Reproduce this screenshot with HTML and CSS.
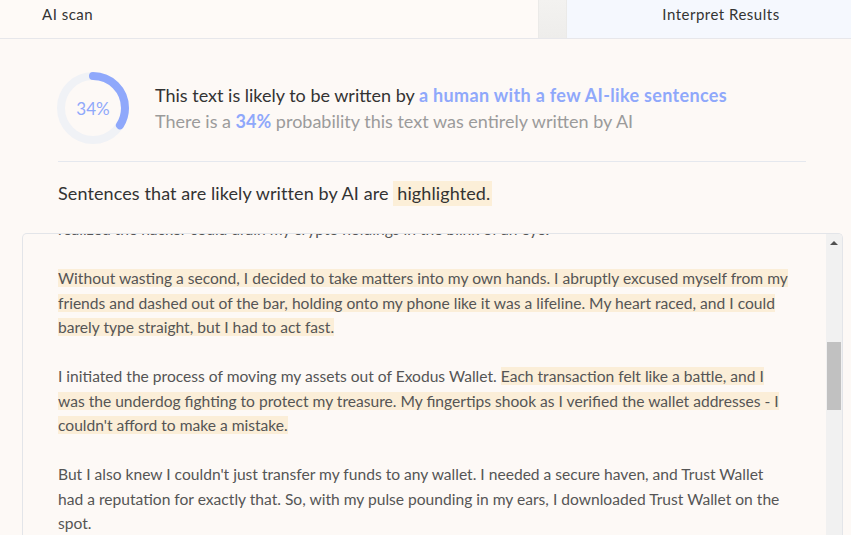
FILE: index.html
```html
<!DOCTYPE html>
<html lang="en">
<head>
<meta charset="utf-8">
<title>AI scan</title>
<link rel="stylesheet" href="styles.css">
</head>
<body>
<div class="tabs">
  <div class="tab tab-active">AI scan</div>
  <div class="tab-gap"></div>
  <div class="tab tab-other">Interpret Results</div>
</div>

<section class="summary">
  <div class="score">
    <svg class="ring" viewBox="0 0 72 72" width="72" height="72">
      <circle cx="36" cy="36" r="32" fill="none" stroke="#f0f2f6" stroke-width="8"/>
      <circle cx="36" cy="36" r="32" fill="none" stroke="#8fa8fb" stroke-width="8" stroke-linecap="round" stroke-dasharray="68.4 201.1" transform="rotate(-90 36 36)"/>
    </svg>
    <span class="ring-label">34%</span>
  </div>
  <div class="verdict">
    <p class="verdict-main">This text is likely to be written by <strong class="accent accent-wide">a human with a few AI-like sentences</strong></p>
    <p class="verdict-sub">There is a <strong class="accent">34%</strong> probability this text was entirely written by AI</p>
  </div>
</section>

<p class="legend">Sentences that are likely written by AI are <span class="legend-mark">highlighted.</span></p>

<div class="textbox">
  <div class="textbox-content">
    <p class="para para-first">realized the hacker could drain my crypto holdings in the blink of an eye.</p>
    <p class="para"><span class="hl">Without wasting a second, I decided to take matters into my own hands. I abruptly excused myself from my friends and dashed out of the bar, holding onto my phone like it was a lifeline. My heart raced, and I could barely type straight, but I had to act fast.</span></p>
    <p class="para">I initiated the process of moving my assets out of Exodus Wallet. <span class="hl">Each transaction felt like a battle, and I was the underdog fighting to protect my treasure. My fingertips shook as I verified the wallet addresses - I couldn't afford to make a mistake.</span></p>
    <p class="para">But I also knew I couldn't just transfer my funds to any wallet. I needed a secure haven, and Trust Wallet had a reputation for exactly that. So, with my pulse pounding in my ears, I downloaded Trust Wallet on the spot.</p>
  </div>
  <div class="scrollbar">
    <div class="scroll-arrow"></div>
    <div class="scroll-thumb"></div>
  </div>
</div>
</body>
</html>
```

FILE: styles.css
```css
* { box-sizing: border-box; }

html, body {
  margin: 0;
  padding: 0;
  height: 100%;
  overflow: hidden;
}

body {
  background: #fdf9f6;
  font-family: Lato, "Open Sans", sans-serif;
  color: #333;
}

p { margin: 0; }

.tabs {
  display: flex;
  height: 39px;
  border-bottom: 1px solid #e7e7eb;
}

.tab {
  font-size: 15px;
  letter-spacing: 0.5px;
  line-height: 18px;
  padding-top: 5px;
  color: #333;
}

.tab-active {
  width: 538px;
  padding-left: 42px;
  background: #fefaf7;
}

.tab-gap {
  width: 29px;
  background: linear-gradient(#f3f2f0, #eeedeb);
  border-left: 1px solid #ebeae8;
  border-right: 1px solid #ebeae8;
}

.tab-other {
  flex: 1;
  text-align: center;
  padding-left: 24px;
  background: #f5f8fe;
}

.summary {
  display: flex;
  align-items: center;
  gap: 26px;
  margin: 0 45px 0 58px;
  padding: 33px 0 17px 0;
  border-bottom: 1px solid #e5e8ee;
}

.score {
  position: relative;
  width: 72px;
  height: 72px;
  margin-left: -1px;
  flex: none;
}

.ring { display: block; }

.ring-label {
  position: absolute;
  inset: 0;
  display: flex;
  align-items: center;
  justify-content: center;
  font-size: 17px;
  color: #8fa8fb;
}

.verdict-main {
  font-size: 18px;
  line-height: 26px;
  color: #333;
}

.verdict-sub {
  font-size: 18px;
  line-height: 26px;
  color: #9b9b9b;
}

.accent {
  color: #8fa8fb;
  font-weight: 700;
}

.accent-wide {
  letter-spacing: 0.33px;
}

.legend {
  margin: 0 0 0 58px;
  height: 71px;
  padding-top: 19px;
  font-size: 18px;
  letter-spacing: 0.1px;
  line-height: 24px;
  color: #333;
}

.legend-mark {
  background: #fcefd8;
  padding: 1px 2px 2px 4px;
}

.textbox {
  display: flex;
  margin-left: 22px;
  width: 821px;
  height: 320px;
  border: 1px solid #e3e5e9;
  border-bottom: none;
  border-radius: 5px 5px 0 0;
  background: #fdf9f6;
  overflow: hidden;
}

.textbox-content {
  flex: 1;
  padding: 0 36px 0 35px;
  overflow: hidden;
  font-size: 15.6px;
  line-height: 24.5px;
  color: #555;
}

.para { margin-bottom: 24.5px; }

.para-first { margin-top: -17px; }

.hl {
  background: #fbeed8;
}

.scrollbar {
  width: 16px;
  flex: none;
  background: #f1f1f1;
  display: flex;
  flex-direction: column;
  align-items: center;
}

.scroll-arrow {
  margin-top: 7px;
  width: 0;
  height: 0;
  border-left: 4px solid transparent;
  border-right: 4px solid transparent;
  border-bottom: 4px solid #505050;
}

.scroll-thumb {
  margin-top: 97px;
  width: 14px;
  height: 68px;
  background: #c1c1c1;
}
```
